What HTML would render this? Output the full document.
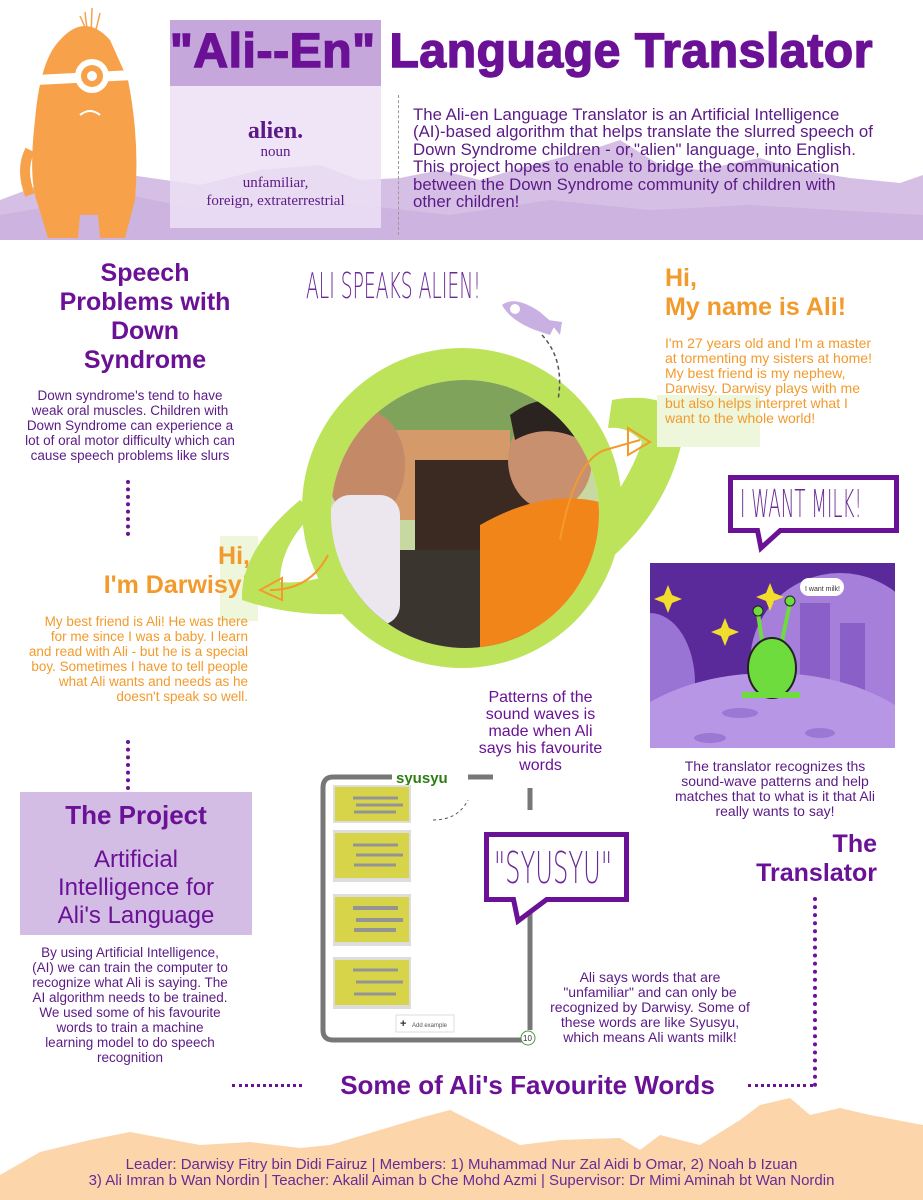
<!DOCTYPE html>
<html><head><meta charset="utf-8"><style>
*{margin:0;padding:0;box-sizing:border-box}
body{width:923px;height:1200px;background:#fff;position:relative;overflow:hidden;font-family:"Liberation Sans",sans-serif;color:#5b1a86}
.a{position:absolute}
.h{font-weight:bold;color:#6a1196}
.o{color:#f39a2c}
.p{font-size:14px;line-height:15px;text-align:center}
.dots{position:absolute;border-left:4px dotted #6a1196}
.thin{font-family:"DejaVu Sans","Liberation Sans",sans-serif;font-weight:200;color:#6a2a96;transform-origin:left top;white-space:nowrap}
</style></head><body>
<svg class="a" style="left:0;top:0" width="923" height="240">
<path d="M0 200 L40 185 L80 190 L130 175 L200 185 L260 170 L320 165 L360 180 L400 178 L440 170 L480 180 L520 168 L590 150 L620 140 L660 165 L700 170 L760 158 L800 170 L850 178 L900 183 L923 175 L923 240 L0 240Z" fill="#d6bfe5"/>
<path d="M0 240 L0 215 L60 205 L130 195 L200 210 L280 200 L360 205 L450 215 L550 200 L650 210 L750 205 L923 215 L923 240Z" fill="#cdb3e0"/>
<path d="M60 40 Q85 12 110 40 L128 80 Q140 140 135 200 L125 238 L100 238 L98 215 L80 215 L78 238 L48 238 L38 205 Q28 180 35 120 Q40 60 60 40Z" fill="#f7a24b"/>
<path d="M36 75 L134 70 L134 80 L36 85Z" fill="#fff"/>
<circle cx="92" cy="76" r="17" fill="#fff"/><circle cx="92" cy="76" r="11" fill="#f7a24b"/><circle cx="92" cy="76" r="5" fill="#fff"/>
<path d="M80 115 Q90 107 100 115" stroke="#fff" stroke-width="2" fill="none"/>
<path d="M88 38 L85 12 M91 38 L92 8 M94 38 L100 13 M90 38 L80 16" stroke="#f7a24b" stroke-width="1.5"/>
<path d="M30 195 Q20 170 30 150" stroke="#f7a24b" stroke-width="10" fill="none"/>
</svg>
<div class="a" style="left:170px;top:20px;width:211px;height:66px;background:#c6a7dc"></div>
<div class="a" style="left:170px;top:86px;width:211px;height:145px;background:rgba(236,224,244,0.85);border-bottom:3px solid #cdb3e0"></div>
<div class="a h" style="left:170px;top:24px;font-size:48px;letter-spacing:0.6px;white-space:nowrap;-webkit-text-stroke:1.5px #6a1196">"Ali--En" Language Translator</div>
<div class="a" style="left:170px;top:118px;width:211px;text-align:center;font-family:'Liberation Serif',serif;color:#5b1a86">
<div style="font-size:24px;font-weight:bold;line-height:26px">alien.</div>
<div style="font-size:15px;line-height:16px">noun</div>
<div style="font-size:15px;line-height:18px;margin-top:14px">unfamiliar,<br>foreign, extraterrestrial</div></div>
<div class="a" style="left:398px;top:95px;height:140px;border-left:1px dashed #999"></div>
<div class="a" style="left:413px;top:106px;width:462px;font-size:16.8px;line-height:17.4px;color:#5b1a86">The Ali-en Language Translator is an Artificial Intelligence (AI)-based algorithm that helps translate the slurred speech of Down Syndrome children - or,"alien" language, into English. This project hopes to enable to bridge the communication between the Down Syndrome community of children with other children!</div>

<div class="a h" style="left:20px;top:259px;width:250px;text-align:center;font-size:25px;line-height:29px">Speech<br>Problems with<br>Down<br>Syndrome</div>
<div class="a p" style="left:22px;top:388px;width:216px;font-size:13.5px">Down syndrome's tend to have weak oral muscles. Children with Down Syndrome can experience a lot of oral motor difficulty which can cause speech problems like slurs</div>
<div class="dots" style="left:126px;top:480px;height:56px"></div>
<div class="a" style="left:220px;top:536px;width:38px;height:85px;background:#eef6dc"></div>
<div class="a h o" style="left:40px;top:542px;width:210px;text-align:right;font-size:25px;line-height:29px">Hi,<br>I'm Darwisy!</div>
<div class="a p o" style="left:26px;top:614px;width:222px;text-align:right;font-size:13.5px">My best friend is Ali! He was there for me since I was a baby. I learn and read with Ali - but he is a special boy. Sometimes I have to tell people what Ali wants and needs as he doesn't speak so well.</div>
<div class="dots" style="left:126px;top:740px;height:50px"></div>
<div class="a" style="left:20px;top:792px;width:232px;height:143px;background:#d4bde5"></div>
<div class="a h" style="left:20px;top:800px;width:232px;text-align:center;font-size:26px">The Project</div>
<div class="a" style="left:20px;top:846px;width:232px;text-align:center;font-size:24px;line-height:28px;color:#6a1196">Artificial<br>Intelligence for<br>Ali's Language</div>
<div class="a p" style="left:32px;top:945px;width:196px;font-size:13.5px">By using Artificial Intelligence, (AI) we can train the computer to recognize what Ali is saying. The AI algorithm needs to be trained. We used some of his favourite words to train a machine learning model to do speech recognition</div>

<svg class="a" style="left:230px;top:250px" width="470" height="430">
<path d="M70 250 Q10 300 12 350 Q70 370 140 362 L115 320 Q75 335 50 332 Q50 295 85 262Z" fill="#bde35a"/>
<path d="M382 150 Q440 140 455 175 Q440 280 330 345 L360 280 Q400 230 412 192 Q398 176 378 178Z" fill="#bde35a"/>
<circle cx="232" cy="258" r="160" fill="#bde35a"/>
<circle cx="235" cy="264" r="134" fill="#fff"/>
<defs><clipPath id="c"><circle cx="235" cy="264" r="134"/></clipPath></defs>
<g clip-path="url(#c)">
<rect x="90" y="120" width="300" height="290" fill="#c7d9a0"/>
<rect x="90" y="120" width="300" height="90" fill="#7fa35a"/>
<rect x="150" y="180" width="130" height="90" fill="#d59a6a"/>
<rect x="185" y="210" width="120" height="130" fill="#3a2a22"/>
<rect x="120" y="300" width="180" height="120" fill="#3b3530"/>
<ellipse cx="135" cy="215" rx="40" ry="55" fill="#c48a68"/>
<rect x="100" y="245" width="70" height="130" rx="20" fill="#ece6ee"/>
<ellipse cx="320" cy="210" rx="42" ry="50" fill="#c99070"/>
<path d="M280 165 Q320 135 360 165 L360 195 Q320 170 285 190Z" fill="#2a2320"/>
<path d="M250 275 Q320 235 380 255 L380 410 L250 410Z" fill="#f2851a"/>
</g>
<path d="M330 290 Q345 210 375 200 L410 190" stroke="#f39a2c" stroke-width="2" fill="none"/>
<path d="M398 178 L420 192 L398 205Z" stroke="#f39a2c" stroke-width="2" fill="none"/>
<path d="M98 305 Q80 340 40 340" stroke="#f39a2c" stroke-width="2" fill="none"/>
<path d="M52 328 L30 340 L52 350Z" stroke="#f39a2c" stroke-width="2" fill="none"/>
<path d="M312 85 Q335 110 328 150" stroke="#555" stroke-width="1.5" stroke-dasharray="4 3" fill="none"/>
<path d="M272 55 Q285 45 310 62 L325 75 L320 85 L305 80 Q280 70 272 55Z" fill="#c9b0e3"/>
<circle cx="285" cy="59" r="5" fill="#fff"/>
<path d="M318 70 L332 72 L330 85Z" fill="#c9b0e3"/>
</svg>
<div class="a thin" style="left:306px;top:266px;font-size:36px;transform:scaleX(0.52)">ALI SPEAKS ALIEN!</div>

<div class="a" style="left:657px;top:395px;width:103px;height:52px;background:#eef6dc"></div>
<div class="a h o" style="left:665px;top:264px;font-size:25px;line-height:29px">Hi,<br>My name is Ali!</div>
<div class="a p o" style="left:665px;top:336px;width:212px;text-align:left;font-size:14px">I'm 27 years old and I'm a master at tormenting my sisters at home! My best friend is my nephew, Darwisy. Darwisy plays with me but also helps interpret what I want to the whole world!</div>
<div class="a" style="left:728px;top:475px;width:171px;height:58px;border:5px solid #6a1196;background:#fff"></div>
<svg class="a" style="left:755px;top:528px" width="40" height="26"><path d="M2 0 L6 20 L28 0" fill="#fff" stroke="#6a1196" stroke-width="5"/></svg>
<div class="a thin" style="left:740px;top:482px;font-size:38px;transform:scaleX(0.48)">I WANT MILK!</div>
<svg class="a" style="left:650px;top:563px" width="245" height="185">
<rect width="245" height="185" fill="#5a2a9a"/>
<ellipse cx="190" cy="100" rx="90" ry="90" fill="#a67fdb"/>
<ellipse cx="0" cy="120" rx="45" ry="70" fill="#9a74d4"/>
<rect x="150" y="40" width="30" height="90" fill="#8a60c8"/><rect x="190" y="60" width="25" height="70" fill="#8a60c8"/>
<ellipse cx="120" cy="210" rx="170" ry="100" fill="#b896e6"/>
<ellipse cx="90" cy="150" rx="18" ry="5" fill="#9b78d3"/><ellipse cx="170" cy="170" rx="15" ry="5" fill="#9b78d3"/><ellipse cx="60" cy="175" rx="16" ry="5" fill="#9b78d3"/>
<path d="M18 22 L22 32 L32 36 L22 40 L18 50 L14 40 L4 36 L14 32Z" fill="#f2dd2c"/>
<path d="M120 20 L124 30 L134 34 L124 38 L120 48 L116 38 L106 34 L116 30Z" fill="#f2dd2c"/>
<path d="M75 55 L79 65 L89 69 L79 73 L75 83 L71 73 L61 69 L71 65Z" fill="#f2dd2c"/>
<path d="M112 78 L108 50 M132 78 L140 40" stroke="#6edc3c" stroke-width="4"/>
<circle cx="108" cy="48" r="5" fill="#6edc3c" stroke="#222"/><circle cx="140" cy="38" r="5" fill="#6edc3c" stroke="#222"/>
<ellipse cx="122" cy="105" rx="24" ry="30" fill="#6edc3c" stroke="#222" stroke-width="2"/>
<path d="M92 132 L150 132" stroke="#6edc3c" stroke-width="6"/>
<rect x="150" y="15" width="44" height="18" rx="9" fill="#fff"/>
<text x="155" y="28" font-size="7" fill="#333" font-family="Liberation Sans">I want milk!</text>
</svg>
<div class="a p" style="left:665px;top:759px;width:220px">The translator recognizes ths sound-wave patterns and help matches that to what is it that Ali really wants to say!</div>
<div class="a h" style="left:700px;top:830px;width:177px;text-align:right;font-size:25px;line-height:29px">The<br>Translator</div>
<div class="dots" style="left:813px;top:897px;height:190px"></div>

<div class="a" style="left:478px;top:689px;width:125px;text-align:center;font-size:16px;line-height:17px;color:#6a1196">Patterns of the sound waves is made when Ali says his favourite words</div>
<svg class="a" style="left:318px;top:770px" width="222" height="280">
<path d="M74 7 L15 7 Q5 7 5 18 L5 260 Q5 270 15 270 L210 270" stroke="#777" stroke-width="5" fill="none"/>
<path d="M150 7 L175 7" stroke="#777" stroke-width="5"/>
<path d="M212 18 L212 40 M212 110 L212 260" stroke="#777" stroke-width="5"/>
<text x="78" y="13" font-size="15" font-weight="bold" fill="#2e7d12" font-family="Liberation Sans">syusyu</text>
<g><rect x="15" y="15" width="78" height="38" fill="#ddd"/><rect x="17" y="17" width="74" height="34" fill="#d8d44a"/><path d="M35 28 H80 M38 35 H85 M36 42 H78" stroke="#6a6ac8" stroke-width="3" opacity=".6"/></g>
<g><rect x="15" y="60" width="78" height="52" fill="#ddd"/><rect x="17" y="63" width="74" height="45" fill="#d8d44a"/><path d="M35 75 H80 M38 85 H85 M36 95 H78" stroke="#6a6ac8" stroke-width="3" opacity=".6"/></g>
<g><rect x="15" y="124" width="78" height="52" fill="#ddd"/><rect x="17" y="127" width="74" height="45" fill="#d8d44a"/><path d="M35 138 H80 M38 150 H85 M36 160 H78" stroke="#6a6ac8" stroke-width="4" opacity=".6"/></g>
<g><rect x="15" y="187" width="78" height="52" fill="#ddd"/><rect x="17" y="190" width="74" height="45" fill="#d8d44a"/><path d="M35 200 H80 M38 212 H85 M36 224 H78" stroke="#6a6ac8" stroke-width="3" opacity=".6"/></g>
<rect x="78" y="245" width="58" height="17" fill="#fff" stroke="#ddd"/>
<text x="82" y="257" font-size="11" font-weight="bold" fill="#333">+</text>
<text x="94" y="257" font-size="6" fill="#555">Add example</text>
<circle cx="210" cy="268" r="7" fill="#fff" stroke="#4a9a3a"/>
<text x="205" y="271" font-size="8" fill="#333">10</text>
<path d="M115 50 Q140 50 150 30" stroke="#555" stroke-dasharray="3 3" fill="none"/>
</svg>
<div class="a" style="left:484px;top:832px;width:145px;height:70px;border:5px solid #6a1196;background:#fff"></div>
<svg class="a" style="left:508px;top:897px" width="50" height="30"><path d="M5 0 L10 24 L42 0" fill="#fff" stroke="#6a1196" stroke-width="5"/></svg>
<div class="a thin" style="left:494px;top:843px;font-size:44px;transform:scaleX(0.55)">"SYUSYU"</div>
<div class="a p" style="left:545px;top:970px;width:210px;font-size:14px">Ali says words that are "unfamiliar" and can only be recognized by Darwisy. Some of these words are like Syusyu, which means Ali wants milk!</div>

<svg class="a" style="left:0;top:1090px" width="923" height="110">
<path d="M0 85 L40 62 L90 50 L130 42 L200 55 L250 52 L300 58 L330 55 L380 40 L420 28 L450 20 L480 35 L520 55 L560 50 L620 48 L640 60 L660 45 L700 55 L740 30 L760 15 L790 8 L810 25 L840 18 L870 25 L923 35 L923 110 L0 110Z" fill="#fcd5aa"/>
</svg>
<div class="dots" style="left:232px;top:1084px;width:70px;height:0;border-left:none;border-top:3px dotted #6a1196"></div>
<div class="dots" style="left:748px;top:1084px;width:65px;height:0;border-left:none;border-top:3px dotted #6a1196"></div>
<div class="a h" style="left:300px;top:1070px;width:455px;text-align:center;font-size:26px">Some of Ali's Favourite Words</div>
<div class="a" style="left:0;top:1157px;width:923px;text-align:center;font-size:15px;line-height:16px;color:#6a2a96">Leader: Darwisy Fitry bin Didi Fairuz | Members: 1) Muhammad Nur Zal Aidi b Omar, 2) Noah b Izuan<br>3) Ali Imran b Wan Nordin | Teacher: Akalil Aiman b Che Mohd Azmi | Supervisor: Dr Mimi Aminah bt Wan Nordin</div>
</body></html>
